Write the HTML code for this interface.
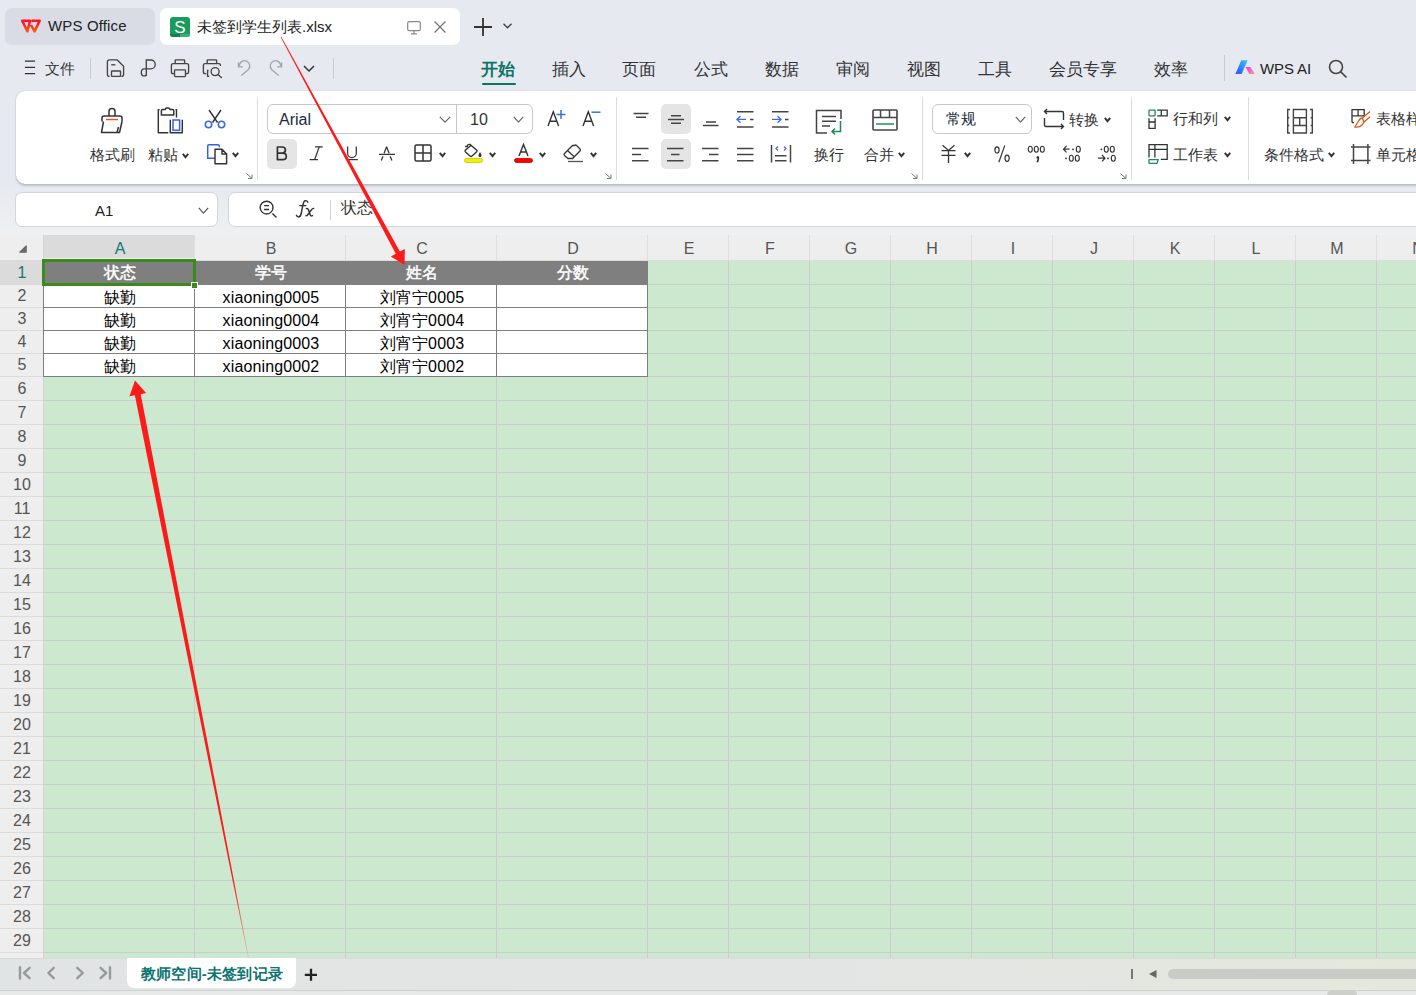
<!DOCTYPE html><html><head><meta charset="utf-8"><style>
*{margin:0;padding:0;box-sizing:border-box}
html,body{width:1416px;height:995px;overflow:hidden}
body{position:relative;background:#e6e9f0;font-family:"Liberation Sans",sans-serif;color:#333}
.abs{position:absolute}
.t{position:absolute;white-space:nowrap;line-height:1}
svg{position:absolute;overflow:visible}
</style></head><body>

<div class="abs" style="left:0;top:150px;width:1416px;height:85px;background:linear-gradient(#e6e9f0 0px,#e6e9f0 34px,#eff0f1 85px)"></div>
<div class="abs" style="left:5px;top:8px;width:150px;height:37px;background:#d9dce4;border-radius:7px"></div>
<svg style="left:18px;top:16px" width="26" height="20" viewBox="0 0 26 20"><defs><linearGradient id="wg" x1="0" y1="0" x2="0" y2="1"><stop offset="0.2" stop-color="#ff1426"/><stop offset="1" stop-color="#ff5a0a"/></linearGradient></defs><path d="M4.2 4.7 H12 L9.4 15.4 Z M13.4 4.7 H21.7 L16.6 15.4 L13 9" fill="none" stroke="url(#wg)" stroke-width="2.5" stroke-linejoin="round"/></svg>
<div class="t" style="left:48px;top:18px;font-size:15px;color:#222;letter-spacing:0.15px">WPS Office</div>
<div class="abs" style="left:160px;top:8px;width:300px;height:37px;background:#fff;border-radius:7px"></div>
<div class="abs" style="left:170px;top:17px;width:20px;height:20px;background:#1a9b5e;border-radius:3px;overflow:hidden"><div class="abs" style="left:0;top:17px;width:10px;height:3px;background:#14804c"></div><div class="abs" style="left:10px;top:17px;width:10px;height:3px;background:#3aae76"></div><div class="t" style="left:0;top:2px;width:20px;text-align:center;font-size:17px;color:#fff">S</div></div>
<div class="t" style="left:197px;top:19px;font-size:15px;color:#222">未签到学生列表.xlsx</div>
<svg style="left:407px;top:21px" width="14" height="14" viewBox="0 0 14 14"><rect x="0.7" y="0.7" width="12.6" height="9" rx="1.5" fill="none" stroke="#888" stroke-width="1.2"/><path d="M7 9.7 V12.8 M4 12.8 H10" stroke="#888" stroke-width="1.2"/></svg>
<svg style="left:434px;top:21px" width="12" height="12" viewBox="0 0 12 12"><path d="M0.5 0.5 L11.5 11.5 M11.5 0.5 L0.5 11.5" stroke="#777" stroke-width="1.3"/></svg>
<svg style="left:474px;top:18px" width="18" height="18" viewBox="0 0 18 18"><path d="M9 0 V18 M0 9 H18" stroke="#333" stroke-width="1.8"/></svg>
<svg style="left:503px;top:23px" width="9" height="6" viewBox="0 0 9 6"><path d="M0.5 0.8 L4.5 4.8 L8.5 0.8" fill="none" stroke="#444" stroke-width="1.4"/></svg>
<svg style="left:24px;top:60px" width="12" height="15" viewBox="0 0 12 15"><path d="M0.9 1 H11.1 M0.9 7.3 H11.1 M0.9 13.6 H11.1" stroke="#333" stroke-width="1.25"/></svg>
<div class="t" style="left:45px;top:61px;font-size:15px;color:#333">文件</div>
<div class="abs" style="left:90px;top:58px;width:1px;height:21px;background:#c9ccd3"></div>
<svg style="left:106px;top:59px" width="20" height="19" viewBox="0 0 20 19"><path d="M3.6 17.4 Q1.4 17.4 1.4 15.2 V3 Q1.4 0.9 3.5 0.9 H11.2 L17.6 7.3 V15.2 Q17.6 17.4 15.4 17.4" fill="none" stroke="#444" stroke-width="1.35"/><path d="M5.2 5.8 H9.4" stroke="#444" stroke-width="1.35"/><rect x="5.5" y="12" width="9" height="5.4" rx="0.6" fill="none" stroke="#444" stroke-width="1.35"/></svg>
<svg style="left:140px;top:59px" width="17" height="19" viewBox="0 0 17 19"><path d="M6.3 17 V1 H10.8 A4.4 4.4 0 0 1 10.8 9.8 H4.3 Q1.3 9.8 1.3 13.4 Q1.3 16.9 4.3 16.9 Q6.3 16.9 6.3 15" fill="none" stroke="#444" stroke-width="1.35"/></svg>
<svg style="left:170px;top:59px" width="20" height="19" viewBox="0 0 20 19"><path d="M5.2 4.6 V1.6 Q5.2 0.9 5.9 0.9 H13.9 Q14.6 0.9 14.6 1.6 V4.6" fill="none" stroke="#444" stroke-width="1.35"/><path d="M4.3 14.6 H2.9 Q1.4 14.6 1.4 13.1 V6.3 Q1.4 4.6 3.1 4.6 H16.9 Q18.6 4.6 18.6 6.3 V13.1 Q18.6 14.6 17.1 14.6 H15.7" fill="none" stroke="#444" stroke-width="1.35"/><rect x="4.5" y="10.8" width="11" height="6.8" rx="0.8" fill="none" stroke="#444" stroke-width="1.35"/></svg>
<svg style="left:202px;top:59px" width="22" height="20" viewBox="0 0 22 20"><path d="M5.2 4.6 V1.6 Q5.2 0.9 5.9 0.9 H13.9 Q14.6 0.9 14.6 1.6 V4.6" fill="none" stroke="#444" stroke-width="1.35"/><path d="M4.3 14.6 H2.9 Q1.4 14.6 1.4 13.1 V6.3 Q1.4 4.6 3.1 4.6 H16.9 Q18.4 4.6 18.4 6.1 V7 M6.6 11.3 H5.6 V17.4 H7.2" fill="none" stroke="#444" stroke-width="1.35"/><circle cx="13.1" cy="12.6" r="4" fill="none" stroke="#444" stroke-width="1.35"/><path d="M16 15.6 L19.8 19" stroke="#444" stroke-width="1.4"/></svg>
<svg style="left:235px;top:59px" width="17" height="19" viewBox="0 0 17 19"><path d="M6.3 16.6 L13.25 10.75 A5.3 5.3 0 1 0 4.2 7" fill="none" stroke="#a3a5a9" stroke-width="1.35"/><path d="M3.4 3.4 V7.8 H7.8" fill="none" stroke="#a3a5a9" stroke-width="1.35"/></svg>
<svg style="left:268px;top:59px" width="17" height="19" viewBox="0 0 17 19"><g transform="translate(17,0) scale(-1,1)"><path d="M6.3 16.6 L13.25 10.75 A5.3 5.3 0 1 0 4.2 7" fill="none" stroke="#a3a5a9" stroke-width="1.35"/><path d="M3.4 3.4 V7.8 H7.8" fill="none" stroke="#a3a5a9" stroke-width="1.35"/></g></svg>
<svg style="left:303px;top:65px" width="12" height="8" viewBox="0 0 12 8"><path d="M1 1 L6 6 L11 1" fill="none" stroke="#333" stroke-width="1.5"/></svg>
<div class="abs" style="left:333px;top:58px;width:1px;height:21px;background:#c9ccd3"></div>
<div class="t" style="left:481px;top:61px;font-size:17px;font-weight:bold;color:#0e7466">开始</div>
<div class="abs" style="left:482px;top:83px;width:34px;height:2.4px;border-radius:1.2px;background:#0e7262"></div>
<div class="t" style="left:552px;top:61px;font-size:17px;color:#333">插入</div>
<div class="t" style="left:622px;top:61px;font-size:17px;color:#333">页面</div>
<div class="t" style="left:694px;top:61px;font-size:17px;color:#333">公式</div>
<div class="t" style="left:765px;top:61px;font-size:17px;color:#333">数据</div>
<div class="t" style="left:836px;top:61px;font-size:17px;color:#333">审阅</div>
<div class="t" style="left:907px;top:61px;font-size:17px;color:#333">视图</div>
<div class="t" style="left:978px;top:61px;font-size:17px;color:#333">工具</div>
<div class="t" style="left:1049px;top:61px;font-size:17px;color:#333">会员专享</div>
<div class="t" style="left:1154px;top:61px;font-size:17px;color:#333">效率</div>
<div class="abs" style="left:1224px;top:55px;width:1px;height:26px;background:#c9ccd3"></div>
<svg style="left:1235px;top:59px" width="21" height="17" viewBox="0 0 21 17"><defs><linearGradient id="ai1" x1="0" y1="1" x2="1" y2="0"><stop offset="0" stop-color="#2f4dff"/><stop offset="1" stop-color="#2fc8ff"/></linearGradient><linearGradient id="ai2" x1="0" y1="0" x2="1" y2="1"><stop offset="0" stop-color="#e535ff"/><stop offset="1" stop-color="#ff9a7a"/></linearGradient></defs><path d="M0.4 15.1 L6.2 1.6 Q6.4 1.2 6.9 1.2 H12.7 L6.6 15.1 Z" fill="url(#ai1)"/><path d="M10.6 8 H15.3 L19.8 15.1 H14.2 Z" fill="url(#ai2)"/></svg>
<div class="t" style="left:1260px;top:61px;font-size:15px;color:#222;letter-spacing:-0.1px">WPS AI</div>
<svg style="left:1328px;top:59px" width="20" height="20" viewBox="0 0 20 20"><circle cx="8" cy="8" r="6.5" fill="none" stroke="#444" stroke-width="1.6"/><path d="M12.8 12.8 L18.5 18.5" stroke="#444" stroke-width="1.7"/></svg>
<div class="abs" style="left:16px;top:91px;width:1420px;height:93px;background:#fff;border-radius:9px;box-shadow:0 1.5px 2px rgba(20,30,60,0.20),0 0 1px rgba(20,30,60,0.25)"></div>
<div class="abs" style="left:257px;top:97px;width:1px;height:83px;background:#dcdcdc"></div>
<div class="abs" style="left:616px;top:97px;width:1px;height:83px;background:#dcdcdc"></div>
<div class="abs" style="left:922px;top:97px;width:1px;height:83px;background:#dcdcdc"></div>
<div class="abs" style="left:1131px;top:97px;width:1px;height:83px;background:#dcdcdc"></div>
<div class="abs" style="left:1248px;top:97px;width:1px;height:83px;background:#dcdcdc"></div>
<svg style="left:246px;top:173px" width="7" height="6" viewBox="0 0 7 6"><path d="M0.5 0.5 L6 5.5 M6 1.5 V5.5 H2" fill="none" stroke="#777" stroke-width="1"/></svg>
<svg style="left:605px;top:173px" width="7" height="6" viewBox="0 0 7 6"><path d="M0.5 0.5 L6 5.5 M6 1.5 V5.5 H2" fill="none" stroke="#777" stroke-width="1"/></svg>
<svg style="left:911px;top:173px" width="7" height="6" viewBox="0 0 7 6"><path d="M0.5 0.5 L6 5.5 M6 1.5 V5.5 H2" fill="none" stroke="#777" stroke-width="1"/></svg>
<svg style="left:1120px;top:173px" width="7" height="6" viewBox="0 0 7 6"><path d="M0.5 0.5 L6 5.5 M6 1.5 V5.5 H2" fill="none" stroke="#777" stroke-width="1"/></svg>
<svg style="left:100px;top:107px" width="24" height="27" viewBox="0 0 24 27"><path d="M9 9 V4.5 A3 3 0 0 1 15 4.5 V9 M2 14.5 V11 Q2 9 4 9 H20 Q22 9 22 11 V14.5 M3.5 14.5 L1.5 25.5 H19.5 L22 14.5 M17 25.5 L18.5 20" fill="none" stroke="#333" stroke-width="1.5" stroke-linejoin="round"/><path d="M6 12.5 H18" stroke="#e05a1e" stroke-width="1.5"/></svg>
<div class="t" style="left:90px;top:147px;font-size:15px;color:#333">格式刷</div>
<svg style="left:157px;top:107px" width="27" height="28" viewBox="0 0 27 28"><path d="M2.5 2.8 H1.3 V25.8 H11.3 M18.5 2.8 H19.5 V10.5 M13.3 12.8 V25.8 H25.3 V12.8" fill="none" stroke="#333" stroke-width="1.45" stroke-linejoin="round"/><path d="M4.4 7.9 V3.8 Q4.4 2.5 5.7 2.5 H8.3 Q8.3 1 9.9 1 H11.2 Q12.8 1 12.8 2.5 H15.5 Q16.8 2.5 16.8 3.8 V7.9 Z" fill="none" stroke="#333" stroke-width="1.45" stroke-linejoin="round"/><rect x="16" y="13" width="6.6" height="10.3" fill="none" stroke="#2f62e6" stroke-width="1.5"/></svg>
<div class="t" style="left:148px;top:147px;font-size:15px;color:#333">粘贴</div>
<svg style="left:182px;top:153px" width="7" height="5" viewBox="0 0 7 5"><path d="M0.8 0.8 L3.5 4.2 L6.2 0.8" fill="none" stroke="#333" stroke-width="1.9"/></svg>
<svg style="left:204px;top:109px" width="22" height="20" viewBox="0 0 22 20"><path d="M5 1 L13.5 13.5 M17 1 L8.5 13.5" stroke="#333" stroke-width="1.4"/><circle cx="4.5" cy="15.5" r="3.2" fill="none" stroke="#3b6fe8" stroke-width="1.6"/><circle cx="17.5" cy="15.5" r="3.2" fill="none" stroke="#3b6fe8" stroke-width="1.6"/></svg>
<svg style="left:206px;top:143px" width="22" height="22" viewBox="0 0 22 22"><path d="M13.3 4.3 V3 Q13.3 1.7 12 1.7 H3 Q1.7 1.7 1.7 3 V15.3 H9" fill="none" stroke="#2f62e6" stroke-width="1.5"/><path d="M9 6.3 H16 L20.6 10.9 V20.7 H9 Z M16 6.3 V10.9 H20.6" fill="none" stroke="#333" stroke-width="1.45" stroke-linejoin="round"/></svg>
<svg style="left:232px;top:152px" width="7" height="5" viewBox="0 0 7 5"><path d="M0.8 0.8 L3.5 4.2 L6.2 0.8" fill="none" stroke="#333" stroke-width="1.9"/></svg>
<div class="abs" style="left:267px;top:104px;width:266px;height:30px;border:1px solid #c8c8c8;border-radius:6px"></div>
<div class="abs" style="left:456px;top:105px;width:1px;height:28px;background:#c8c8c8"></div>
<div class="t" style="left:279px;top:112px;font-size:16px;color:#222a3c">Arial</div>
<svg style="left:439px;top:116px" width="12" height="7" viewBox="0 0 12 7"><path d="M0.8 0.8 L6.0 6.2 L11.2 0.8" fill="none" stroke="#666" stroke-width="1.2"/></svg>
<div class="t" style="left:470px;top:112px;font-size:16px;color:#333">10</div>
<svg style="left:513px;top:116px" width="11" height="7" viewBox="0 0 11 7"><path d="M0.8 0.8 L5.5 6.2 L10.2 0.8" fill="none" stroke="#666" stroke-width="1.2"/></svg>
<svg style="left:547px;top:109px" width="20" height="18" viewBox="0 0 20 18"><path d="M1 17 L6.3 2.8 L11.6 17 M2.9 12.3 H9.7" fill="none" stroke="#333" stroke-width="1.4"/><path d="M9.5 5.5 H18.5 M14 1 V10" stroke="#3b6fe8" stroke-width="1.5"/></svg>
<svg style="left:582px;top:109px" width="20" height="18" viewBox="0 0 20 18"><path d="M1 17 L6.3 2.8 L11.6 17 M2.9 12.3 H9.7" fill="none" stroke="#333" stroke-width="1.4"/><path d="M9.5 3.2 H18.5" stroke="#3b6fe8" stroke-width="1.5"/></svg>
<div class="abs" style="left:267px;top:139px;width:30px;height:30px;background:#e5e5e5;border-radius:5px"></div>
<svg style="left:276px;top:146px" width="12" height="15" viewBox="0 0 12 15"><path d="M1.4 1 H6.2 Q9.4 1 9.4 4.1 Q9.4 7.1 6.2 7.1 H1.4 Z M1.4 7.1 H6.8 Q10.3 7.1 10.3 10.4 Q10.3 13.6 6.8 13.6 H1.4 Z" fill="none" stroke="#333" stroke-width="1.7" stroke-linejoin="round"/></svg>
<svg style="left:309px;top:146px" width="15" height="15" viewBox="0 0 15 15"><path d="M6 0.9 H13.7 M10.2 0.9 L5.6 13.7 M0.7 13.7 H9" fill="none" stroke="#333" stroke-width="1.25"/></svg>
<svg style="left:345px;top:146px" width="14" height="15" viewBox="0 0 14 15"><path d="M2.6 0.5 V7.3 A4.35 4.35 0 0 0 11.3 7.3 V0.5 M1.8 13.6 H12.8" fill="none" stroke="#333" stroke-width="1.25"/></svg>
<svg style="left:378px;top:146px" width="18" height="16" viewBox="0 0 18 16"><path d="M3.3 14.6 L5 10.2 M8.6 0.8 L6.1 7.2 M8.6 0.8 L11.1 7.2 M12.2 10.2 L13.9 14.6 M1 8.4 H17" fill="none" stroke="#333" stroke-width="1.25"/></svg>
<svg style="left:414px;top:144px" width="18" height="18" viewBox="0 0 18 18"><rect x="1" y="1" width="16" height="16" rx="1.5" fill="none" stroke="#333" stroke-width="1.5"/><path d="M9 1 V17 M1 9 H17" stroke="#333" stroke-width="1.5"/></svg>
<svg style="left:439px;top:152px" width="7" height="5" viewBox="0 0 7 5"><path d="M0.8 0.8 L3.5 4.2 L6.2 0.8" fill="none" stroke="#333" stroke-width="1.9"/></svg>
<svg style="left:463px;top:143px" width="21" height="21" viewBox="0 0 21 21"><path d="M4 3 Q5 1 7 1.5 L13.5 7 Q14.5 8 13.5 9 L9 13 Q8 14 7 13 L2.5 9 Q1.5 8 2.5 7 L8.5 2" fill="none" stroke="#333" stroke-width="1.4"/><path d="M2 3.5 H5" stroke="#333" stroke-width="1.4"/><path d="M17 9 Q18.5 11 18.5 12.5 A1.5 1.5 0 0 1 15.5 12.5 Q15.5 11 17 9Z" fill="#333"/><rect x="1.5" y="15.5" width="18" height="4" rx="2" fill="#f5f000" stroke="#c8c400" stroke-width="0.8"/></svg>
<svg style="left:489px;top:152px" width="7" height="5" viewBox="0 0 7 5"><path d="M0.8 0.8 L3.5 4.2 L6.2 0.8" fill="none" stroke="#333" stroke-width="1.9"/></svg>
<svg style="left:513px;top:143px" width="21" height="21" viewBox="0 0 21 21"><path d="M6 13 L10.5 1.5 L15 13 M7.5 9 H13.5" fill="none" stroke="#333" stroke-width="1.4"/><rect x="1.5" y="15.5" width="18" height="4" rx="2" fill="#f00" stroke="#c00" stroke-width="0.8"/></svg>
<svg style="left:539px;top:152px" width="7" height="5" viewBox="0 0 7 5"><path d="M0.8 0.8 L3.5 4.2 L6.2 0.8" fill="none" stroke="#333" stroke-width="1.9"/></svg>
<svg style="left:563px;top:144px" width="21" height="19" viewBox="0 0 21 19"><path d="M9.5 1.5 L1.5 9.5 Q0.5 10.5 1.5 11.5 L5 14.5 H9.5 L17 7 Q18 6 17 5 L13.5 1.5 Q12.5 0.5 11.5 1.5 Z M5 7 L11.5 13" fill="none" stroke="#333" stroke-width="1.3"/><path d="M5 17.5 H20" stroke="#555" stroke-width="1.3"/></svg>
<svg style="left:590px;top:152px" width="7" height="5" viewBox="0 0 7 5"><path d="M0.8 0.8 L3.5 4.2 L6.2 0.8" fill="none" stroke="#333" stroke-width="1.9"/></svg>
<div class="abs" style="left:661px;top:104px;width:30px;height:30px;background:#e5e5e5;border-radius:5px"></div>
<div class="abs" style="left:661px;top:139px;width:30px;height:30px;background:#e5e5e5;border-radius:5px"></div>
<svg style="left:630px;top:108px" width="20" height="20" viewBox="0 0 20 20"><path d="M3.5 5.5 H18.5 M6 9.2 H16 " stroke="#444" stroke-width="1.5"/></svg>
<svg style="left:665px;top:108px" width="20" height="20" viewBox="0 0 20 20"><path d="M6 7.7 H16 M3 11.4 H19 M6 15.2 H16 " stroke="#444" stroke-width="1.5"/></svg>
<svg style="left:700px;top:108px" width="20" height="20" viewBox="0 0 20 20"><path d="M6 14 H16 M3 17.5 H18.5 " stroke="#444" stroke-width="1.5"/></svg>
<svg style="left:630px;top:140px" width="20" height="24" viewBox="0 0 20 24"><path d="M2 8.4 H18.5 M2 14.5 H11 M2 20.8 H18.5 " stroke="#444" stroke-width="1.5"/></svg>
<svg style="left:665px;top:140px" width="20" height="24" viewBox="0 0 20 24"><path d="M2 8.4 H18.5 M6 14.5 H14.5 M2 20.8 H18.5 " stroke="#444" stroke-width="1.5"/></svg>
<svg style="left:700px;top:140px" width="20" height="24" viewBox="0 0 20 24"><path d="M2 8.4 H18.5 M9 14.5 H18.5 M2 20.8 H18.5 " stroke="#444" stroke-width="1.5"/></svg>
<svg style="left:735px;top:140px" width="20" height="24" viewBox="0 0 20 24"><path d="M2 8.4 H18.5 M2 14.5 H18.5 M2 20.8 H18.5 " stroke="#444" stroke-width="1.5"/></svg>
<svg style="left:735px;top:108px" width="20" height="22" viewBox="0 0 20 22"><path d="M2 3.8 H18.5 M15 11.4 H18.5 M2 19 H18.5" stroke="#444" stroke-width="1.5"/><path d="M5.5 8 L2 11.4 L5.5 14.8 M2 11.4 H11" fill="none" stroke="#3b6fe8" stroke-width="1.4"/></svg>
<svg style="left:770px;top:108px" width="20" height="22" viewBox="0 0 20 22"><path d="M2 3.8 H18.5 M15 11.4 H18.5 M2 19 H18.5" stroke="#444" stroke-width="1.5"/><path d="M7.5 8 L11 11.4 L7.5 14.8 M2 11.4 H11" fill="none" stroke="#3b6fe8" stroke-width="1.4"/></svg>
<svg style="left:770px;top:144px" width="22" height="20" viewBox="0 0 22 20"><path d="M1.5 1 V18.5 M20.5 1 V18.5 M5 11.7 H16.5 M5 16.8 H16.5" stroke="#444" stroke-width="1.5"/><path d="M8 2.5 L6 4.5 L8 6.5 M14 2.5 L16 4.5 L14 6.5" fill="none" stroke="#3b6fe8" stroke-width="1.3"/></svg>
<svg style="left:815px;top:109px" width="28" height="27" viewBox="0 0 28 27"><path d="M12 24 H1.5 V1.5 H26 V10" fill="none" stroke="#444" stroke-width="1.5"/><path d="M7 7.5 H21 M7 12.3 H21 M7 17 H15" stroke="#444" stroke-width="1.5"/><path d="M25.5 12 V22.5 H17 M20 19.5 L17 22.5 L20 25.5" fill="none" stroke="#1a8a5a" stroke-width="1.5"/></svg>
<div class="t" style="left:814px;top:147px;font-size:15px;color:#333">换行</div>
<svg style="left:872px;top:109px" width="26" height="22" viewBox="0 0 26 22"><rect x="1" y="1" width="24" height="20" rx="1" fill="none" stroke="#444" stroke-width="1.6"/><path d="M1 8.5 H25 M8.5 1 V8.5 M17.5 1 V8.5" stroke="#444" stroke-width="1.5"/><path d="M4 15 H22" stroke="#2a9a6a" stroke-width="1.6"/></svg>
<div class="t" style="left:864px;top:147px;font-size:15px;color:#333">合并</div>
<svg style="left:898px;top:152px" width="7" height="5" viewBox="0 0 7 5"><path d="M0.8 0.8 L3.5 4.2 L6.2 0.8" fill="none" stroke="#333" stroke-width="1.9"/></svg>
<div class="abs" style="left:932px;top:104px;width:100px;height:30px;border:1px solid #c8c8c8;border-radius:6px"></div>
<div class="t" style="left:946px;top:112px;font-size:14.5px;color:#222a3c">常规</div>
<svg style="left:1015px;top:116px" width="11" height="7" viewBox="0 0 11 7"><path d="M0.8 0.8 L5.5 6.2 L10.2 0.8" fill="none" stroke="#666" stroke-width="1.2"/></svg>
<svg style="left:1043px;top:108px" width="22" height="22" viewBox="0 0 22 22"><path d="M4 1 L1.5 3.5 L4 6 M1.5 3.5 H19 Q20.5 3.5 20.5 5 V12 M18 21 L20.5 18.5 L18 16 M20.5 18.5 H3 Q1.5 18.5 1.5 17 V10" fill="none" stroke="#333" stroke-width="1.4"/></svg>
<div class="t" style="left:1069px;top:112px;font-size:15px;color:#333">转换</div>
<svg style="left:1104px;top:117px" width="7" height="5" viewBox="0 0 7 5"><path d="M0.8 0.8 L3.5 4.2 L6.2 0.8" fill="none" stroke="#333" stroke-width="1.9"/></svg>
<svg style="left:940px;top:144px" width="17" height="20" viewBox="0 0 17 20"><path d="M2.5 1.3 L8.5 6.5 L14.5 1.3 M1.5 6.7 H15.5 M1.5 11.4 H15.5 M8.5 6.5 V19" fill="none" stroke="#333" stroke-width="1.3"/></svg>
<svg style="left:964px;top:152px" width="7" height="5" viewBox="0 0 7 5"><path d="M0.8 0.8 L3.5 4.2 L6.2 0.8" fill="none" stroke="#333" stroke-width="1.9"/></svg>
<svg style="left:993px;top:144px" width="18" height="20" viewBox="0 0 18 20"><ellipse cx="4" cy="5.9" rx="2.1" ry="3.1" fill="none" stroke="#333" stroke-width="1.2"/><ellipse cx="14.1" cy="14.3" rx="2.1" ry="3.1" fill="none" stroke="#333" stroke-width="1.2"/><path d="M11.8 1.4 L5.8 18.3" stroke="#333" stroke-width="1.2"/></svg>
<svg style="left:1027px;top:144px" width="20" height="20" viewBox="0 0 20 20"><ellipse cx="3.30" cy="5.2" rx="2" ry="3" fill="none" stroke="#333" stroke-width="1.15"/><ellipse cx="9.30" cy="5.2" rx="2" ry="3" fill="none" stroke="#333" stroke-width="1.15"/><ellipse cx="15.30" cy="5.2" rx="2" ry="3" fill="none" stroke="#333" stroke-width="1.15"/><path d="M10.3 12.8 Q11.8 12.8 11.3 15 L10.3 18.2" fill="none" stroke="#333" stroke-width="1.6"/><circle cx="10.6" cy="13.6" r="1.2" fill="#333"/></svg>
<svg style="left:1062px;top:144px" width="20" height="20" viewBox="0 0 20 20"><path d="M4.5 2 L1.5 5.2 L4.5 8.4 M1.5 5.2 H7.5" fill="none" stroke="#333" stroke-width="1.2"/><rect x="10.2" y="4.6" width="1.6" height="1.6" fill="#333"/><ellipse cx="16.30" cy="5.2" rx="2" ry="3" fill="none" stroke="#333" stroke-width="1.15"/><rect x="3.2" y="13.6" width="1.6" height="1.6" fill="#333"/><ellipse cx="9.30" cy="14.2" rx="2" ry="3" fill="none" stroke="#333" stroke-width="1.15"/><ellipse cx="15.30" cy="14.2" rx="2" ry="3" fill="none" stroke="#333" stroke-width="1.15"/></svg>
<svg style="left:1097px;top:144px" width="20" height="20" viewBox="0 0 20 20"><rect x="3.6" y="4.6" width="1.6" height="1.6" fill="#333"/><ellipse cx="9.30" cy="5.2" rx="2" ry="3" fill="none" stroke="#333" stroke-width="1.15"/><ellipse cx="15.30" cy="5.2" rx="2" ry="3" fill="none" stroke="#333" stroke-width="1.15"/><path d="M5 11 L8 14.2 L5 17.4 M1 14.2 H8" fill="none" stroke="#333" stroke-width="1.2"/><rect x="10.2" y="13.6" width="1.6" height="1.6" fill="#333"/><ellipse cx="16.30" cy="14.2" rx="2" ry="3" fill="none" stroke="#333" stroke-width="1.15"/></svg>
<svg style="left:1147px;top:108px" width="22" height="22" viewBox="0 0 22 22"><rect x="2" y="2.1" width="6.1" height="5.7" rx="0.5" fill="none" stroke="#1f8a5c" stroke-width="1.3"/><path d="M10.2 2.1 H20.2 V7.8 H10.2 M14.3 2.1 V7.8 M2 10.2 V20.3 H8.1 V10.2 M2 14 H8.1" fill="none" stroke="#333" stroke-width="1.3"/></svg>
<div class="t" style="left:1173px;top:111px;font-size:15px;color:#333">行和列</div>
<svg style="left:1224px;top:116px" width="7" height="5" viewBox="0 0 7 5"><path d="M0.8 0.8 L3.5 4.2 L6.2 0.8" fill="none" stroke="#333" stroke-width="1.9"/></svg>
<svg style="left:1147px;top:143px" width="22" height="22" viewBox="0 0 22 22"><path d="M2 14.4 V1.6 H20.2 V16.4 H13.8 M2 6.4 H20.2 M7.9 1.6 V14.4" fill="none" stroke="#333" stroke-width="1.3"/><path d="M2 16.6 H11.3 L10 20.3 H2 Z" fill="none" stroke="#1f8a5c" stroke-width="1.3" stroke-linejoin="round"/></svg>
<div class="t" style="left:1173px;top:147px;font-size:15px;color:#333">工作表</div>
<svg style="left:1224px;top:152px" width="7" height="5" viewBox="0 0 7 5"><path d="M0.8 0.8 L3.5 4.2 L6.2 0.8" fill="none" stroke="#333" stroke-width="1.9"/></svg>
<svg style="left:1286px;top:108px" width="28" height="27" viewBox="0 0 28 27"><path d="M4 1.5 H1.7 V25 H4 M1.7 9.8 H3.3 M1.7 17.5 H3.3 M24 1.5 H26.3 V25 H24 M26.3 9.8 H24.7 M26.3 17.5 H24.7 M7.4 1.5 H20.4 V25 H7.4 Z M7.4 9.8 H20.4 M7.4 17.5 H20.4 M13.7 9.8 V17.5" fill="none" stroke="#444" stroke-width="1.4"/></svg>
<div class="t" style="left:1264px;top:147px;font-size:15px;color:#333">条件格式</div>
<svg style="left:1328px;top:152px" width="7" height="5" viewBox="0 0 7 5"><path d="M0.8 0.8 L3.5 4.2 L6.2 0.8" fill="none" stroke="#333" stroke-width="1.9"/></svg>
<svg style="left:1350px;top:108px" width="22" height="22" viewBox="0 0 22 22"><path d="M2 14.6 V1.6 H14.2 V7.8 M2 7.8 H14.2 M8.1 1.6 V7.8 H8.1 M2 14.6 H4" fill="none" stroke="#333" stroke-width="1.3"/><path d="M20 3.5 L12.5 10 M20 8.8 L13.8 14.2 M12.5 10 Q10 10 8.5 13 L4.8 19 Q10 19.5 12 17 Q13.5 15.5 13.8 14.2 Z" fill="none" stroke="#d55a1c" stroke-width="1.3" stroke-linejoin="round"/></svg>
<div class="t" style="left:1376px;top:111px;font-size:15px;color:#333">表格样式</div>
<svg style="left:1350px;top:143px" width="22" height="22" viewBox="0 0 22 22"><path d="M3.5 1 V21 M17.9 1 V21 M1 4 H20.5 M1 17.5 H20.5" stroke="#444" stroke-width="1.5"/></svg>
<div class="t" style="left:1376px;top:147px;font-size:15px;color:#333">单元格</div>
<div class="abs" style="left:15px;top:192px;width:203px;height:35px;background:#fff;border:1px solid #d3d5da;border-radius:7px"></div>
<div class="t" style="left:95px;top:203px;font-size:15px;color:#222">A1</div>
<svg style="left:198px;top:207px" width="11" height="7" viewBox="0 0 11 7"><path d="M0.8 0.8 L5.5 6.2 L10.2 0.8" fill="none" stroke="#555" stroke-width="1.2"/></svg>
<div class="abs" style="left:228px;top:192px;width:1200px;height:35px;background:#fff;border:1px solid #d3d5da;border-radius:7px"></div>
<svg style="left:258px;top:199px" width="20" height="20" viewBox="0 0 20 20"><circle cx="8.6" cy="8.6" r="6.4" fill="none" stroke="#333" stroke-width="1.4"/><path d="M6.1 6.6 H11.1 M6.1 10.5 H11.1" stroke="#333" stroke-width="1.3"/><path d="M14.4 14.6 L18.5 18.6" stroke="#333" stroke-width="1.4"/></svg>
<svg style="left:294px;top:199px" width="22" height="20" viewBox="0 0 22 20"><path d="M13.8 3.2 Q13 1.3 11.2 1.7 Q9.6 2.2 8.7 7 L7.3 14 Q6.5 18.2 4.4 17.9 Q3 17.7 2.4 16.3 M5.8 6.6 H11.8 M12.3 9.6 Q13.8 8.9 14.5 11 L16.2 15.8 Q16.8 17.5 18.5 16.6 M19.7 9.4 Q18.6 9.2 17.3 11 L13.5 16 Q12.8 17 12 16.8" fill="none" stroke="#333" stroke-width="1.45" stroke-linecap="round"/></svg>
<div class="abs" style="left:330px;top:200px;width:1px;height:20px;background:#d0d0d0"></div>
<div class="t" style="left:341px;top:200px;font-size:16px;color:#333">状态</div>
<div class="abs" style="left:0;top:235px;width:1416px;height:723px;background:#eeeeee"></div>
<div class="abs" style="left:44px;top:261px;width:1372px;height:697px;background:#cce8cf"></div>
<div class="abs" style="left:44px;top:235px;width:151px;height:23px;background:#dbdbdb"></div>
<div class="abs" style="left:0;top:261px;width:43px;height:24px;background:#dbdbdb"></div>
<svg style="left:19px;top:245px" width="8" height="8" viewBox="0 0 8 8"><path d="M7.2 0.8 V7.2 H0.8 Z" fill="#6a6a6a" stroke="#6a6a6a" stroke-width="1.2" stroke-linejoin="round"/></svg>
<svg style="left:0;top:0" width="1416" height="995" viewBox="0 0 1416 995" shape-rendering="crispEdges"><rect x="43" y="235" width="1" height="25" fill="#dedede"/><rect x="194" y="235" width="1" height="25" fill="#dedede"/><rect x="345" y="235" width="1" height="25" fill="#dedede"/><rect x="496" y="235" width="1" height="25" fill="#dedede"/><rect x="647" y="235" width="1" height="25" fill="#dedede"/><rect x="728" y="235" width="1" height="25" fill="#dedede"/><rect x="809" y="235" width="1" height="25" fill="#dedede"/><rect x="890" y="235" width="1" height="25" fill="#dedede"/><rect x="971" y="235" width="1" height="25" fill="#dedede"/><rect x="1052" y="235" width="1" height="25" fill="#dedede"/><rect x="1133" y="235" width="1" height="25" fill="#dedede"/><rect x="1214" y="235" width="1" height="25" fill="#dedede"/><rect x="1295" y="235" width="1" height="25" fill="#dedede"/><rect x="1376" y="235" width="1" height="25" fill="#dedede"/><rect x="0" y="260" width="1416" height="1" fill="#dcdcdc"/><rect x="0" y="284" width="43" height="1" fill="#dcdcdc"/><rect x="0" y="307" width="43" height="1" fill="#dcdcdc"/><rect x="0" y="330" width="43" height="1" fill="#dcdcdc"/><rect x="0" y="353" width="43" height="1" fill="#dcdcdc"/><rect x="0" y="376" width="43" height="1" fill="#dcdcdc"/><rect x="0" y="400" width="43" height="1" fill="#dcdcdc"/><rect x="0" y="424" width="43" height="1" fill="#dcdcdc"/><rect x="0" y="448" width="43" height="1" fill="#dcdcdc"/><rect x="0" y="472" width="43" height="1" fill="#dcdcdc"/><rect x="0" y="496" width="43" height="1" fill="#dcdcdc"/><rect x="0" y="520" width="43" height="1" fill="#dcdcdc"/><rect x="0" y="544" width="43" height="1" fill="#dcdcdc"/><rect x="0" y="568" width="43" height="1" fill="#dcdcdc"/><rect x="0" y="592" width="43" height="1" fill="#dcdcdc"/><rect x="0" y="616" width="43" height="1" fill="#dcdcdc"/><rect x="0" y="640" width="43" height="1" fill="#dcdcdc"/><rect x="0" y="664" width="43" height="1" fill="#dcdcdc"/><rect x="0" y="688" width="43" height="1" fill="#dcdcdc"/><rect x="0" y="712" width="43" height="1" fill="#dcdcdc"/><rect x="0" y="736" width="43" height="1" fill="#dcdcdc"/><rect x="0" y="760" width="43" height="1" fill="#dcdcdc"/><rect x="0" y="784" width="43" height="1" fill="#dcdcdc"/><rect x="0" y="808" width="43" height="1" fill="#dcdcdc"/><rect x="0" y="832" width="43" height="1" fill="#dcdcdc"/><rect x="0" y="856" width="43" height="1" fill="#dcdcdc"/><rect x="0" y="880" width="43" height="1" fill="#dcdcdc"/><rect x="0" y="904" width="43" height="1" fill="#dcdcdc"/><rect x="0" y="928" width="43" height="1" fill="#dcdcdc"/><rect x="0" y="952" width="43" height="1" fill="#dcdcdc"/><rect x="43" y="235" width="1" height="723" fill="#d4d4d4"/><rect x="194" y="261" width="1" height="697" fill="#cccccc"/><rect x="345" y="261" width="1" height="697" fill="#cccccc"/><rect x="496" y="261" width="1" height="697" fill="#cccccc"/><rect x="647" y="261" width="1" height="697" fill="#cccccc"/><rect x="728" y="261" width="1" height="697" fill="#cccccc"/><rect x="809" y="261" width="1" height="697" fill="#cccccc"/><rect x="890" y="261" width="1" height="697" fill="#cccccc"/><rect x="971" y="261" width="1" height="697" fill="#cccccc"/><rect x="1052" y="261" width="1" height="697" fill="#cccccc"/><rect x="1133" y="261" width="1" height="697" fill="#cccccc"/><rect x="1214" y="261" width="1" height="697" fill="#cccccc"/><rect x="1295" y="261" width="1" height="697" fill="#cccccc"/><rect x="1376" y="261" width="1" height="697" fill="#cccccc"/><rect x="44" y="284" width="1372" height="1" fill="#cccccc"/><rect x="44" y="307" width="1372" height="1" fill="#cccccc"/><rect x="44" y="330" width="1372" height="1" fill="#cccccc"/><rect x="44" y="353" width="1372" height="1" fill="#cccccc"/><rect x="44" y="376" width="1372" height="1" fill="#cccccc"/><rect x="44" y="400" width="1372" height="1" fill="#cccccc"/><rect x="44" y="424" width="1372" height="1" fill="#cccccc"/><rect x="44" y="448" width="1372" height="1" fill="#cccccc"/><rect x="44" y="472" width="1372" height="1" fill="#cccccc"/><rect x="44" y="496" width="1372" height="1" fill="#cccccc"/><rect x="44" y="520" width="1372" height="1" fill="#cccccc"/><rect x="44" y="544" width="1372" height="1" fill="#cccccc"/><rect x="44" y="568" width="1372" height="1" fill="#cccccc"/><rect x="44" y="592" width="1372" height="1" fill="#cccccc"/><rect x="44" y="616" width="1372" height="1" fill="#cccccc"/><rect x="44" y="640" width="1372" height="1" fill="#cccccc"/><rect x="44" y="664" width="1372" height="1" fill="#cccccc"/><rect x="44" y="688" width="1372" height="1" fill="#cccccc"/><rect x="44" y="712" width="1372" height="1" fill="#cccccc"/><rect x="44" y="736" width="1372" height="1" fill="#cccccc"/><rect x="44" y="760" width="1372" height="1" fill="#cccccc"/><rect x="44" y="784" width="1372" height="1" fill="#cccccc"/><rect x="44" y="808" width="1372" height="1" fill="#cccccc"/><rect x="44" y="832" width="1372" height="1" fill="#cccccc"/><rect x="44" y="856" width="1372" height="1" fill="#cccccc"/><rect x="44" y="880" width="1372" height="1" fill="#cccccc"/><rect x="44" y="904" width="1372" height="1" fill="#cccccc"/><rect x="44" y="928" width="1372" height="1" fill="#cccccc"/><rect x="44" y="952" width="1372" height="1" fill="#cccccc"/><rect x="44" y="261" width="604" height="24" fill="#7f7f7f"/><rect x="44" y="285" width="603" height="91" fill="#ffffff"/><rect x="43" y="307" width="605" height="1" fill="#7f7f7f"/><rect x="43" y="330" width="605" height="1" fill="#7f7f7f"/><rect x="43" y="353" width="605" height="1" fill="#7f7f7f"/><rect x="43" y="376" width="605" height="1" fill="#7f7f7f"/><rect x="43" y="285" width="1" height="92" fill="#7f7f7f"/><rect x="194" y="285" width="1" height="92" fill="#7f7f7f"/><rect x="345" y="285" width="1" height="92" fill="#7f7f7f"/><rect x="496" y="285" width="1" height="92" fill="#7f7f7f"/><rect x="647" y="285" width="1" height="92" fill="#7f7f7f"/><rect x="43.5" y="260.5" width="151" height="24" fill="none" stroke="#3a8a1e" stroke-width="3"/><rect x="191" y="282" width="7" height="7" fill="#fff"/><rect x="192" y="283" width="5" height="5" fill="#3a8a1e"/></svg>
<div class="t" style="left:45px;top:241px;width:150px;text-align:center;font-size:16px;color:#117a6c">A</div>
<div class="t" style="left:196px;top:241px;width:150px;text-align:center;font-size:16px;color:#555">B</div>
<div class="t" style="left:347px;top:241px;width:150px;text-align:center;font-size:16px;color:#555">C</div>
<div class="t" style="left:498px;top:241px;width:150px;text-align:center;font-size:16px;color:#555">D</div>
<div class="t" style="left:649px;top:241px;width:80px;text-align:center;font-size:16px;color:#555">E</div>
<div class="t" style="left:730px;top:241px;width:80px;text-align:center;font-size:16px;color:#555">F</div>
<div class="t" style="left:811px;top:241px;width:80px;text-align:center;font-size:16px;color:#555">G</div>
<div class="t" style="left:892px;top:241px;width:80px;text-align:center;font-size:16px;color:#555">H</div>
<div class="t" style="left:973px;top:241px;width:80px;text-align:center;font-size:16px;color:#555">I</div>
<div class="t" style="left:1054px;top:241px;width:80px;text-align:center;font-size:16px;color:#555">J</div>
<div class="t" style="left:1135px;top:241px;width:80px;text-align:center;font-size:16px;color:#555">K</div>
<div class="t" style="left:1216px;top:241px;width:80px;text-align:center;font-size:16px;color:#555">L</div>
<div class="t" style="left:1297px;top:241px;width:80px;text-align:center;font-size:16px;color:#555">M</div>
<div class="t" style="left:1378px;top:241px;width:80px;text-align:center;font-size:16px;color:#555">N</div>
<div class="t" style="left:0;top:265px;width:44px;text-align:center;font-size:16px;color:#117a6c">1</div>
<div class="t" style="left:0;top:288px;width:44px;text-align:center;font-size:16px;color:#555">2</div>
<div class="t" style="left:0;top:311px;width:44px;text-align:center;font-size:16px;color:#555">3</div>
<div class="t" style="left:0;top:334px;width:44px;text-align:center;font-size:16px;color:#555">4</div>
<div class="t" style="left:0;top:357px;width:44px;text-align:center;font-size:16px;color:#555">5</div>
<div class="t" style="left:0;top:381px;width:44px;text-align:center;font-size:16px;color:#555">6</div>
<div class="t" style="left:0;top:405px;width:44px;text-align:center;font-size:16px;color:#555">7</div>
<div class="t" style="left:0;top:429px;width:44px;text-align:center;font-size:16px;color:#555">8</div>
<div class="t" style="left:0;top:453px;width:44px;text-align:center;font-size:16px;color:#555">9</div>
<div class="t" style="left:0;top:477px;width:44px;text-align:center;font-size:16px;color:#555">10</div>
<div class="t" style="left:0;top:501px;width:44px;text-align:center;font-size:16px;color:#555">11</div>
<div class="t" style="left:0;top:525px;width:44px;text-align:center;font-size:16px;color:#555">12</div>
<div class="t" style="left:0;top:549px;width:44px;text-align:center;font-size:16px;color:#555">13</div>
<div class="t" style="left:0;top:573px;width:44px;text-align:center;font-size:16px;color:#555">14</div>
<div class="t" style="left:0;top:597px;width:44px;text-align:center;font-size:16px;color:#555">15</div>
<div class="t" style="left:0;top:621px;width:44px;text-align:center;font-size:16px;color:#555">16</div>
<div class="t" style="left:0;top:645px;width:44px;text-align:center;font-size:16px;color:#555">17</div>
<div class="t" style="left:0;top:669px;width:44px;text-align:center;font-size:16px;color:#555">18</div>
<div class="t" style="left:0;top:693px;width:44px;text-align:center;font-size:16px;color:#555">19</div>
<div class="t" style="left:0;top:717px;width:44px;text-align:center;font-size:16px;color:#555">20</div>
<div class="t" style="left:0;top:741px;width:44px;text-align:center;font-size:16px;color:#555">21</div>
<div class="t" style="left:0;top:765px;width:44px;text-align:center;font-size:16px;color:#555">22</div>
<div class="t" style="left:0;top:789px;width:44px;text-align:center;font-size:16px;color:#555">23</div>
<div class="t" style="left:0;top:813px;width:44px;text-align:center;font-size:16px;color:#555">24</div>
<div class="t" style="left:0;top:837px;width:44px;text-align:center;font-size:16px;color:#555">25</div>
<div class="t" style="left:0;top:861px;width:44px;text-align:center;font-size:16px;color:#555">26</div>
<div class="t" style="left:0;top:885px;width:44px;text-align:center;font-size:16px;color:#555">27</div>
<div class="t" style="left:0;top:909px;width:44px;text-align:center;font-size:16px;color:#555">28</div>
<div class="t" style="left:0;top:933px;width:44px;text-align:center;font-size:16px;color:#555">29</div>
<div class="t" style="left:45px;top:261px;width:150px;height:23px;line-height:23px;text-align:center;font-size:16px;color:#000;letter-spacing:0.13px;color:#fff;-webkit-text-stroke:0.45px #fff">状态</div>
<div class="t" style="left:196px;top:261px;width:150px;height:23px;line-height:23px;text-align:center;font-size:16px;color:#000;letter-spacing:0.13px;color:#fff;-webkit-text-stroke:0.45px #fff">学号</div>
<div class="t" style="left:347px;top:261px;width:150px;height:23px;line-height:23px;text-align:center;font-size:16px;color:#000;letter-spacing:0.13px;color:#fff;-webkit-text-stroke:0.45px #fff">姓名</div>
<div class="t" style="left:498px;top:261px;width:150px;height:23px;line-height:23px;text-align:center;font-size:16px;color:#000;letter-spacing:0.13px;color:#fff;-webkit-text-stroke:0.45px #fff">分数</div>
<div class="t" style="left:45px;top:287px;width:150px;height:22px;line-height:22px;text-align:center;font-size:16px;color:#000;letter-spacing:0.13px;">缺勤</div>
<div class="t" style="left:196px;top:287px;width:150px;height:22px;line-height:22px;text-align:center;font-size:16px;color:#000;letter-spacing:0.13px;">xiaoning0005</div>
<div class="t" style="left:347px;top:287px;width:150px;height:22px;line-height:22px;text-align:center;font-size:16px;color:#000;letter-spacing:0.13px;">刘宵宁0005</div>
<div class="t" style="left:45px;top:310px;width:150px;height:22px;line-height:22px;text-align:center;font-size:16px;color:#000;letter-spacing:0.13px;">缺勤</div>
<div class="t" style="left:196px;top:310px;width:150px;height:22px;line-height:22px;text-align:center;font-size:16px;color:#000;letter-spacing:0.13px;">xiaoning0004</div>
<div class="t" style="left:347px;top:310px;width:150px;height:22px;line-height:22px;text-align:center;font-size:16px;color:#000;letter-spacing:0.13px;">刘宵宁0004</div>
<div class="t" style="left:45px;top:333px;width:150px;height:22px;line-height:22px;text-align:center;font-size:16px;color:#000;letter-spacing:0.13px;">缺勤</div>
<div class="t" style="left:196px;top:333px;width:150px;height:22px;line-height:22px;text-align:center;font-size:16px;color:#000;letter-spacing:0.13px;">xiaoning0003</div>
<div class="t" style="left:347px;top:333px;width:150px;height:22px;line-height:22px;text-align:center;font-size:16px;color:#000;letter-spacing:0.13px;">刘宵宁0003</div>
<div class="t" style="left:45px;top:356px;width:150px;height:22px;line-height:22px;text-align:center;font-size:16px;color:#000;letter-spacing:0.13px;">缺勤</div>
<div class="t" style="left:196px;top:356px;width:150px;height:22px;line-height:22px;text-align:center;font-size:16px;color:#000;letter-spacing:0.13px;">xiaoning0002</div>
<div class="t" style="left:347px;top:356px;width:150px;height:22px;line-height:22px;text-align:center;font-size:16px;color:#000;letter-spacing:0.13px;">刘宵宁0002</div>
<div class="abs" style="left:0;top:958px;width:1416px;height:32px;background:linear-gradient(90deg,#e1e4e4 0%,#e3e5e4 60%,#e4e8dc 100%)"></div>
<div class="abs" style="left:0;top:990px;width:1416px;height:1px;background:#cfd0d0"></div>
<div class="abs" style="left:0;top:991px;width:1416px;height:4px;background:#e8e9e9"></div>
<svg style="left:0;top:958px" width="130" height="32" viewBox="0 958 130 32"><path d="M20 967.3 V978.5 M29.6 967.8 L24 973 L29.6 978.2 M53.8 967.8 L48.3 973 L53.8 978.2 M77.3 967.8 L82.8 973 L77.3 978.2 M100.6 967.8 L106.2 973 L100.6 978.2 M110 967.3 V978.5" fill="none" stroke="#999" stroke-width="2.4" stroke-linecap="round" stroke-linejoin="round"/></svg>
<div class="abs" style="left:0;top:958px;width:1416px;height:1px;background:#d9d9d9"></div>
<div class="abs" style="left:127px;top:958px;width:169px;height:30px;background:#fff;border-radius:0 0 7px 7px"></div>
<div class="t" style="left:141px;top:966px;font-size:15px;font-weight:bold;color:#0e7470;letter-spacing:0.2px">教师空间-未签到记录</div>
<svg style="left:304px;top:968px" width="14" height="14" viewBox="0 0 14 14"><path d="M7 0.8 V12.8 M0.8 6.8 H13" stroke="#222" stroke-width="2.3"/></svg>
<div class="abs" style="left:1131px;top:969px;width:2px;height:10px;background:#777"></div>
<svg style="left:1149px;top:970px" width="8" height="8" viewBox="0 0 8 8"><path d="M7.5 0 V8 L0 4 Z" fill="#666"/></svg>
<div class="abs" style="left:1168px;top:969px;width:300px;height:10px;background:#c9cbc6;border-radius:5px"></div>
<div class="abs" style="left:1327px;top:990px;width:30px;height:10px;background:#cdd0ca;border-radius:5px"></div>
<svg style="left:0;top:0" width="1416" height="995" viewBox="0 0 1416 995"><defs><linearGradient id="tailg" gradientUnits="userSpaceOnUse" x1="248.5" y1="958" x2="232" y2="880"><stop offset="0" stop-color="#fd1a1a" stop-opacity="0.15"/><stop offset="1" stop-color="#fd1a1a" stop-opacity="1"/></linearGradient></defs><path d="M280.69 37.17 L395.81 253.79 L390.80 256.50 L404.50 265.00 L404.87 248.88 L399.85 251.59 L281.31 36.83 Z" fill="#fd1a1a"/><path d="M248.79 957.94 L140.74 394.15 L146.14 393.09 L135.00 380.50 L129.46 396.37 L134.85 395.31 L248.21 958.06 Z" fill="url(#tailg)"/></svg>
</body></html>
